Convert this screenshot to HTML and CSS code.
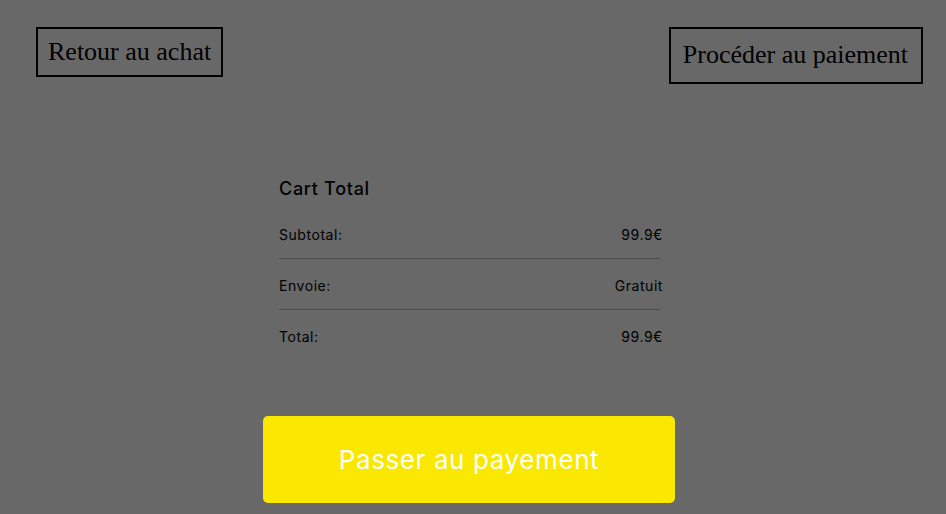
FILE: index.html
```html
<!DOCTYPE html>
<html lang="fr">
<head>
<meta charset="utf-8">
<title>Panier</title>
<link rel="stylesheet" href="styles.css">
</head>
<body>
<header class="top">
  <button class="nav-btn nav-back">Retour au achat</button>
  <button class="nav-btn nav-pay">Procéder au paiement</button>
</header>
<main class="checkout">
  <section class="cart">
    <h2 class="cart-title">Cart Total</h2>
    <div class="row"><span>Subtotal:</span><span>99.9€</span></div>
    <div class="row"><span>Envoie:</span><span>Gratuit</span></div>
    <div class="row row-last"><span>Total:</span><span>99.9€</span></div>
  </section>
  <button class="pay-btn">Passer au payement</button>
</main>
</body>
</html>
```
FILE: styles.css
```css
html, body {
  margin: 0;
  padding: 0;
  background: #686868;
  height: 100%;
}
body {
  font-family: Inter, "Open Sans", sans-serif;
  color: #000;
}
.top {
  display: flex;
  justify-content: space-between;
  align-items: flex-start;
  padding: 27px 23px 0 36px;
}
.nav-btn {
  font-family: "Liberation Serif", "Times New Roman", serif;
  background: transparent;
  border: 2px solid #000;
  color: #000;
  margin: 0;
  cursor: pointer;
}
.nav-back {
  font-size: 26px;
  line-height: 30px;
  padding: 8px 10px;
}
.nav-pay {
  font-size: 26px;
  line-height: 30px;
  padding: 11px 13px 12px 12px;
}
.checkout {
  width: 412px;
  margin: 91px 0 0 263px;
}
.cart {
  margin-left: 16px;
  width: 384px;
}
.cart-title {
  margin: 0 0 6px;
  font-size: 18px;
  line-height: 27px;
  font-weight: 500;
  letter-spacing: 0.7px;
}
.row {
  display: flex;
  justify-content: space-between;
  font-size: 14px;
  line-height: 21px;
  padding: 16px 0 13px;
  border-bottom: 1px solid #4e4e4e;
  margin-right: 2px;
  letter-spacing: 0.55px;
}
.row span:last-child {
  margin-right: -2px;
}
.row-last {
  border-bottom: none;
}
.pay-btn {
  display: block;
  margin-top: 56px;
  width: 412px;
  height: 87px;
  border: none;
  border-radius: 5px;
  background: #fae800;
  color: #fff;
  font-family: Inter, "Open Sans", sans-serif;
  font-size: 26px;
  letter-spacing: 0.6px;
  cursor: pointer;
}
```
